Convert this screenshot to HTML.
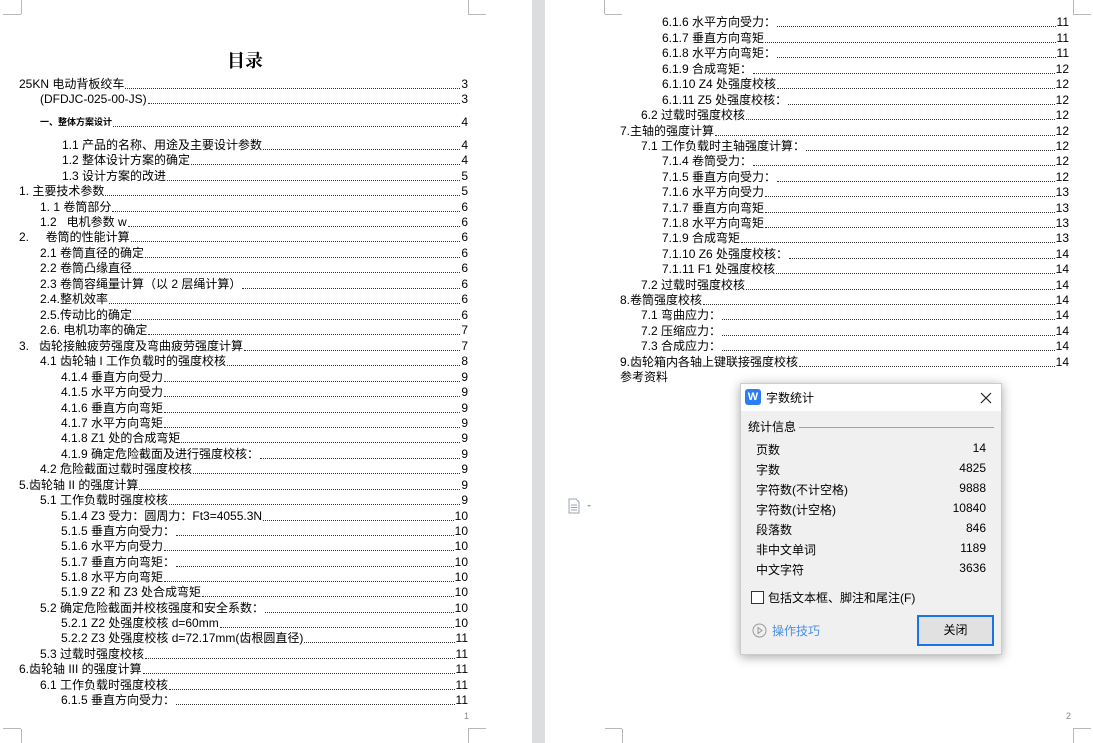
<!DOCTYPE html>
<html><head><meta charset="utf-8"><style>
body{margin:0;width:1093px;height:743px;position:relative;overflow:hidden;background:#fff;font-family:"Liberation Sans","Noto Sans CJK SC",sans-serif;font-size:12px;color:#000}
.strip{position:absolute;left:532px;top:0;width:13px;height:743px;background:#dcdddf}
.m{position:absolute;background:#b8b8b8}
.l{position:absolute;display:flex;align-items:flex-end;height:15px;line-height:15px;white-space:nowrap;margin-top:2px}
.l .d{flex:1;border-bottom:1px dotted #333;margin:0 1px 3px 1px}
.L{width:calc(468px - var(--x))}
.R{width:calc(1069px - var(--x))}
h1{position:absolute;left:0;width:490px;top:47px;margin:0;text-align:center;font-size:18px;font-family:"Noto Serif CJK SC",serif;font-weight:bold}
.dlg{position:absolute;left:740px;top:383px;width:262px;height:272px;background:#f0f0f0;box-shadow:0 2px 10px rgba(0,0,0,.35);border:1px solid #ccc;box-sizing:border-box;font-size:12px}
.tb{height:27px;background:#fff;position:relative}
.row{position:absolute;left:15px;width:230px;display:flex;justify-content:space-between;font-size:12px}
</style></head><body>
<div class="strip"></div>
<div class="m" style="left:468px;top:0;width:1px;height:14px"></div><div class="m" style="left:468px;top:14px;width:18px;height:1px"></div>
<div class="m" style="left:21px;top:0;width:1px;height:14px"></div><div class="m" style="left:3px;top:14px;width:18px;height:1px"></div>
<div class="m" style="left:604px;top:0;width:1px;height:14px"></div><div class="m" style="left:605px;top:14px;width:17px;height:1px"></div>
<div class="m" style="left:1073px;top:0;width:1px;height:14px"></div><div class="m" style="left:1073px;top:14px;width:18px;height:1px"></div>
<div class="m" style="left:21px;top:729px;width:1px;height:14px"></div><div class="m" style="left:3px;top:728px;width:18px;height:1px"></div>
<div class="m" style="left:468px;top:729px;width:1px;height:14px"></div><div class="m" style="left:468px;top:728px;width:18px;height:1px"></div>
<div class="m" style="left:622px;top:729px;width:1px;height:14px"></div><div class="m" style="left:605px;top:728px;width:17px;height:1px"></div>
<div class="m" style="left:1073px;top:729px;width:1px;height:14px"></div><div class="m" style="left:1073px;top:728px;width:18px;height:1px"></div>
<div style="position:absolute;left:464px;top:711px;font-size:9px;color:#888">1</div>
<div style="position:absolute;left:1066px;top:711px;font-size:9px;color:#888">2</div>
<h1>目录</h1>
<div class="l L" style="--x:19px;left:19px;top:75px"><span>25KN 电动背板绞车</span><span class="d"></span><span>3</span></div>
<div class="l L" style="--x:40px;left:40px;top:90px"><span>(DFDJC-025-00-JS)</span><span class="d"></span><span>3</span></div>
<div class="l L" style="--x:40px;left:40px;top:113px"><span style="font-size:9px;font-weight:bold">一、整体方案设计</span><span class="d"></span><span>4</span></div>
<div class="l L" style="--x:62px;left:62px;top:136px"><span>1.1 产品的名称、用途及主要设计参数</span><span class="d"></span><span>4</span></div>
<div class="l L" style="--x:62px;left:62px;top:151px"><span>1.2 整体设计方案的确定</span><span class="d"></span><span>4</span></div>
<div class="l L" style="--x:62px;left:62px;top:167px"><span>1.3 设计方案的改进</span><span class="d"></span><span>5</span></div>
<div class="l L" style="--x:19px;left:19px;top:182px"><span>1. 主要技术参数</span><span class="d"></span><span>5</span></div>
<div class="l L" style="--x:40px;left:40px;top:198px"><span>1. 1 卷筒部分</span><span class="d"></span><span>6</span></div>
<div class="l L" style="--x:40px;left:40px;top:213px"><span>1.2 &nbsp;&nbsp;电机参数 w</span><span class="d"></span><span>6</span></div>
<div class="l L" style="--x:19px;left:19px;top:228px"><span>2. &nbsp;&nbsp;&nbsp;&nbsp;卷筒的性能计算</span><span class="d"></span><span>6</span></div>
<div class="l L" style="--x:40px;left:40px;top:244px"><span>2.1 卷筒直径的确定</span><span class="d"></span><span>6</span></div>
<div class="l L" style="--x:40px;left:40px;top:259px"><span>2.2 卷筒凸缘直径</span><span class="d"></span><span>6</span></div>
<div class="l L" style="--x:40px;left:40px;top:275px"><span>2.3 卷筒容绳量计算（以 2 层绳计算）</span><span class="d"></span><span>6</span></div>
<div class="l L" style="--x:40px;left:40px;top:290px"><span>2.4.整机效率</span><span class="d"></span><span>6</span></div>
<div class="l L" style="--x:40px;left:40px;top:306px"><span>2.5.传动比的确定</span><span class="d"></span><span>6</span></div>
<div class="l L" style="--x:40px;left:40px;top:321px"><span>2.6. 电机功率的确定</span><span class="d"></span><span>7</span></div>
<div class="l L" style="--x:19px;left:19px;top:337px"><span>3. &nbsp;&nbsp;齿轮接触疲劳强度及弯曲疲劳强度计算</span><span class="d"></span><span>7</span></div>
<div class="l L" style="--x:40px;left:40px;top:352px"><span>4.1 齿轮轴 I 工作负载时的强度校核</span><span class="d"></span><span>8</span></div>
<div class="l L" style="--x:61px;left:61px;top:368px"><span>4.1.4 垂直方向受力</span><span class="d"></span><span>9</span></div>
<div class="l L" style="--x:61px;left:61px;top:383px"><span>4.1.5 水平方向受力</span><span class="d"></span><span>9</span></div>
<div class="l L" style="--x:61px;left:61px;top:399px"><span>4.1.6 垂直方向弯矩</span><span class="d"></span><span>9</span></div>
<div class="l L" style="--x:61px;left:61px;top:414px"><span>4.1.7 水平方向弯矩</span><span class="d"></span><span>9</span></div>
<div class="l L" style="--x:61px;left:61px;top:429px"><span>4.1.8 Z1 处的合成弯矩</span><span class="d"></span><span>9</span></div>
<div class="l L" style="--x:61px;left:61px;top:445px"><span>4.1.9 确定危险截面及进行强度校核：</span><span class="d"></span><span>9</span></div>
<div class="l L" style="--x:40px;left:40px;top:460px"><span>4.2 危险截面过载时强度校核</span><span class="d"></span><span>9</span></div>
<div class="l L" style="--x:19px;left:19px;top:476px"><span>5.齿轮轴 II 的强度计算</span><span class="d"></span><span>9</span></div>
<div class="l L" style="--x:40px;left:40px;top:491px"><span>5.1 工作负载时强度校核</span><span class="d"></span><span>9</span></div>
<div class="l L" style="--x:61px;left:61px;top:507px"><span>5.1.4 Z3 受力：圆周力：Ft3=4055.3N</span><span class="d"></span><span>10</span></div>
<div class="l L" style="--x:61px;left:61px;top:522px"><span>5.1.5 垂直方向受力：</span><span class="d"></span><span>10</span></div>
<div class="l L" style="--x:61px;left:61px;top:537px"><span>5.1.6 水平方向受力</span><span class="d"></span><span>10</span></div>
<div class="l L" style="--x:61px;left:61px;top:553px"><span>5.1.7 垂直方向弯矩：</span><span class="d"></span><span>10</span></div>
<div class="l L" style="--x:61px;left:61px;top:568px"><span>5.1.8 水平方向弯矩</span><span class="d"></span><span>10</span></div>
<div class="l L" style="--x:61px;left:61px;top:583px"><span>5.1.9 Z2 和 Z3 处合成弯矩</span><span class="d"></span><span>10</span></div>
<div class="l L" style="--x:40px;left:40px;top:599px"><span>5.2 确定危险截面并校核强度和安全系数：</span><span class="d"></span><span>10</span></div>
<div class="l L" style="--x:61px;left:61px;top:614px"><span>5.2.1 Z2 处强度校核 d=60mm</span><span class="d"></span><span>10</span></div>
<div class="l L" style="--x:61px;left:61px;top:629px"><span>5.2.2 Z3 处强度校核 d=72.17mm(齿根圆直径)</span><span class="d"></span><span>11</span></div>
<div class="l L" style="--x:40px;left:40px;top:645px"><span>5.3 过载时强度校核</span><span class="d"></span><span>11</span></div>
<div class="l L" style="--x:19px;left:19px;top:660px"><span>6.齿轮轴 III 的强度计算</span><span class="d"></span><span>11</span></div>
<div class="l L" style="--x:40px;left:40px;top:676px"><span>6.1 工作负载时强度校核</span><span class="d"></span><span>11</span></div>
<div class="l L" style="--x:61px;left:61px;top:691px"><span>6.1.5 垂直方向受力：</span><span class="d"></span><span>11</span></div>

<div class="l R" style="--x:662px;left:662px;top:13px"><span>6.1.6 水平方向受力：</span><span class="d"></span><span>11</span></div>
<div class="l R" style="--x:662px;left:662px;top:29px"><span>6.1.7 垂直方向弯矩</span><span class="d"></span><span>11</span></div>
<div class="l R" style="--x:662px;left:662px;top:44px"><span>6.1.8 水平方向弯矩：</span><span class="d"></span><span>11</span></div>
<div class="l R" style="--x:662px;left:662px;top:60px"><span>6.1.9 合成弯矩：</span><span class="d"></span><span>12</span></div>
<div class="l R" style="--x:662px;left:662px;top:75px"><span>6.1.10 Z4 处强度校核</span><span class="d"></span><span>12</span></div>
<div class="l R" style="--x:662px;left:662px;top:91px"><span>6.1.11 Z5 处强度校核：</span><span class="d"></span><span>12</span></div>
<div class="l R" style="--x:641px;left:641px;top:106px"><span>6.2 过载时强度校核</span><span class="d"></span><span>12</span></div>
<div class="l R" style="--x:620px;left:620px;top:122px"><span>7.主轴的强度计算</span><span class="d"></span><span>12</span></div>
<div class="l R" style="--x:641px;left:641px;top:137px"><span>7.1 工作负载时主轴强度计算：</span><span class="d"></span><span>12</span></div>
<div class="l R" style="--x:662px;left:662px;top:152px"><span>7.1.4 卷筒受力：</span><span class="d"></span><span>12</span></div>
<div class="l R" style="--x:662px;left:662px;top:168px"><span>7.1.5 垂直方向受力：</span><span class="d"></span><span>12</span></div>
<div class="l R" style="--x:662px;left:662px;top:183px"><span>7.1.6 水平方向受力</span><span class="d"></span><span>13</span></div>
<div class="l R" style="--x:662px;left:662px;top:199px"><span>7.1.7 垂直方向弯矩</span><span class="d"></span><span>13</span></div>
<div class="l R" style="--x:662px;left:662px;top:214px"><span>7.1.8 水平方向弯矩</span><span class="d"></span><span>13</span></div>
<div class="l R" style="--x:662px;left:662px;top:229px"><span>7.1.9 合成弯矩</span><span class="d"></span><span>13</span></div>
<div class="l R" style="--x:662px;left:662px;top:245px"><span>7.1.10 Z6 处强度校核：</span><span class="d"></span><span>14</span></div>
<div class="l R" style="--x:662px;left:662px;top:260px"><span>7.1.11 F1 处强度校核</span><span class="d"></span><span>14</span></div>
<div class="l R" style="--x:641px;left:641px;top:276px"><span>7.2 过载时强度校核</span><span class="d"></span><span>14</span></div>
<div class="l R" style="--x:620px;left:620px;top:291px"><span>8.卷筒强度校核</span><span class="d"></span><span>14</span></div>
<div class="l R" style="--x:641px;left:641px;top:306px"><span>7.1 弯曲应力：</span><span class="d"></span><span>14</span></div>
<div class="l R" style="--x:641px;left:641px;top:322px"><span>7.2 压缩应力：</span><span class="d"></span><span>14</span></div>
<div class="l R" style="--x:641px;left:641px;top:337px"><span>7.3 合成应力：</span><span class="d"></span><span>14</span></div>
<div class="l R" style="--x:620px;left:620px;top:353px"><span>9.齿轮箱内各轴上键联接强度校核</span><span class="d"></span><span>14</span></div>
<div class="l" style="left:620px;top:368px"><span>参考资料</span></div>

<svg style="position:absolute;left:567px;top:498px" width="28" height="16"><path d="M2 1h7l3 3v11H2z" fill="#fff" stroke="#9aa4b0"/><path d="M4 7h6M4 9.5h6M4 12h6" stroke="#9aa4b0"/><path d="M20 7l2 2 2-2z" fill="#9aa4b0"/></svg>

<div class="dlg">
 <div class="tb">
  <div style="position:absolute;left:4px;top:5px;width:16px;height:16px;background:#2c7cf4;border-radius:3px;color:#fff;font-size:11px;font-weight:bold;text-align:center;line-height:16px">W</div>
  <div style="position:absolute;left:25px;top:5px;font-size:12px">字数统计</div>
  <svg style="position:absolute;left:239px;top:8px" width="12" height="12"><path d="M1 1l10 10M11 1L1 11" stroke="#222" stroke-width="1.2"/></svg>
 </div>
 <div style="position:absolute;left:7px;top:34px">统计信息</div>
 <div style="position:absolute;left:58px;top:43px;width:195px;height:1px;background:#a0a0a0"></div>
 <div class="row" style="top:57px"><span>页数</span><span>14</span></div>
 <div class="row" style="top:77px"><span>字数</span><span>4825</span></div>
 <div class="row" style="top:97px"><span>字符数(不计空格)</span><span>9888</span></div>
 <div class="row" style="top:117px"><span>字符数(计空格)</span><span>10840</span></div>
 <div class="row" style="top:137px"><span>段落数</span><span>846</span></div>
 <div class="row" style="top:157px"><span>非中文单词</span><span>1189</span></div>
 <div class="row" style="top:177px"><span>中文字符</span><span>3636</span></div>
 <div style="position:absolute;left:10px;top:207px;width:11px;height:11px;border:1px solid #333;background:#fff"></div>
 <div style="position:absolute;left:27px;top:205px">包括文本框、脚注和尾注(F)</div>
 <svg style="position:absolute;left:11px;top:239px" width="15" height="15"><circle cx="7.5" cy="7.5" r="6.5" fill="none" stroke="#999"/><path d="M6 4.5l4 3-4 3z" fill="none" stroke="#999"/></svg>
 <div style="position:absolute;left:31px;top:238px;color:#4a90e2">操作技巧</div>
 <div style="position:absolute;left:176px;top:231px;width:73px;height:27px;border:2px solid #1a73e8;background:#e1e1e1;text-align:center;line-height:27px">关闭</div>
</div>
</body></html>
